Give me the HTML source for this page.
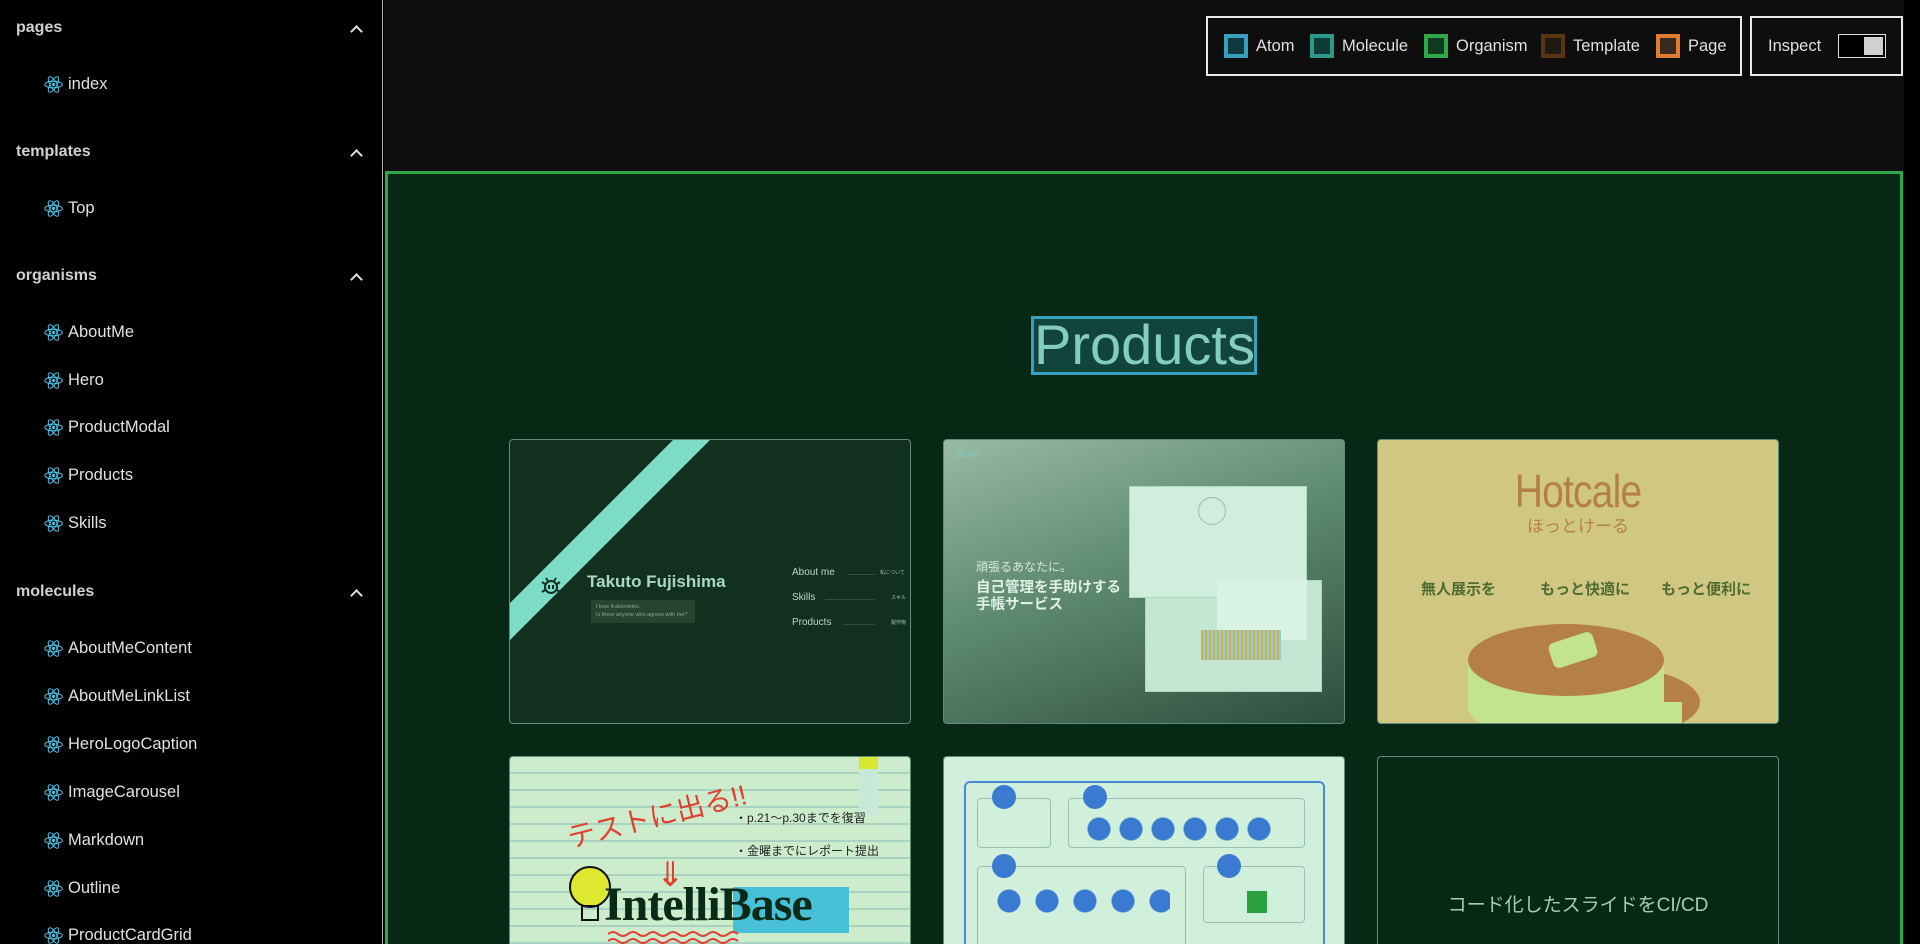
<!DOCTYPE html>
<html><head><meta charset="utf-8"><style>
*{margin:0;padding:0;box-sizing:border-box}
html,body{width:1920px;height:944px;overflow:hidden}
body{background:#000;font-family:"Liberation Sans","Noto Sans CJK JP",sans-serif;position:relative}
.abs{position:absolute}
.side{left:0;top:0;width:383px;height:944px;background:#000;border-right:1px solid #bbb}
.h{position:absolute;left:16px;font-size:16px;font-weight:bold;color:#d0d0d0;line-height:20px}
.chev{position:absolute;left:352px;width:9px;height:9px;border-left:2px solid #ddd;border-top:2px solid #ddd;transform:rotate(45deg)}
.it{position:absolute;left:44px;font-size:16.5px;color:#e0e0e0;line-height:20px;display:flex;align-items:center;gap:5px}
.main{left:384px;top:0;width:1520px;height:944px;background:#0e0e0e}
.frame{left:385px;top:171px;width:1518px;height:773px;background:#072815;border:3px solid #2ea84a;border-bottom:none}
.card{position:absolute;width:402px;height:285px;border:1px solid #5f8f78;border-radius:4px;overflow:hidden}
.r2{height:188px;border-bottom:none;border-radius:4px 4px 0 0}
.leg{left:1206px;top:16px;width:536px;height:60px;border:2px solid #e8e8e8;background:#0e0e0e}
.sw{position:absolute;top:16px;width:24px;height:24px;border:4px solid}
.lt{position:absolute;top:16px;font-size:16.5px;color:#e0e0e0;line-height:24px}
</style></head><body>
<svg width="0" height="0" style="position:absolute"><defs><symbol id="r" viewBox="0 0 24 24"><g fill="none" stroke="#4cc3e6" stroke-width="1.3"><ellipse cx="12" cy="12" rx="11" ry="4.2"/><ellipse cx="12" cy="12" rx="11" ry="4.2" transform="rotate(60 12 12)"/><ellipse cx="12" cy="12" rx="11" ry="4.2" transform="rotate(120 12 12)"/></g><circle cx="12" cy="12" r="2" fill="#4cc3e6"/></symbol></defs></svg>

<div class="abs side">
<div class="h" style="top:18px">pages</div><div class="chev" style="top:27px"></div>
<div class="it" style="top:74px"><svg width="19" height="19"><use href="#r"/></svg>index</div>
<div class="h" style="top:142px">templates</div><div class="chev" style="top:151px"></div>
<div class="it" style="top:198px"><svg width="19" height="19"><use href="#r"/></svg>Top</div>
<div class="h" style="top:266px">organisms</div><div class="chev" style="top:275px"></div>
<div class="it" style="top:322px"><svg width="19" height="19"><use href="#r"/></svg>AboutMe</div>
<div class="it" style="top:370px"><svg width="19" height="19"><use href="#r"/></svg>Hero</div>
<div class="it" style="top:417px"><svg width="19" height="19"><use href="#r"/></svg>ProductModal</div>
<div class="it" style="top:465px"><svg width="19" height="19"><use href="#r"/></svg>Products</div>
<div class="it" style="top:513px"><svg width="19" height="19"><use href="#r"/></svg>Skills</div>
<div class="h" style="top:582px">molecules</div><div class="chev" style="top:591px"></div>
<div class="it" style="top:638px"><svg width="19" height="19"><use href="#r"/></svg>AboutMeContent</div>
<div class="it" style="top:686px"><svg width="19" height="19"><use href="#r"/></svg>AboutMeLinkList</div>
<div class="it" style="top:734px"><svg width="19" height="19"><use href="#r"/></svg>HeroLogoCaption</div>
<div class="it" style="top:782px"><svg width="19" height="19"><use href="#r"/></svg>ImageCarousel</div>
<div class="it" style="top:830px"><svg width="19" height="19"><use href="#r"/></svg>Markdown</div>
<div class="it" style="top:878px"><svg width="19" height="19"><use href="#r"/></svg>Outline</div>
<div class="it" style="top:925px"><svg width="19" height="19"><use href="#r"/></svg>ProductCardGrid</div>
</div>

<div class="abs main"></div>
<div class="abs leg">
<div class="sw" style="left:16px;border-color:#3a9fbf;background:#0f3a40"></div><div class="lt" style="left:48px">Atom</div>
<div class="sw" style="left:102px;border-color:#2c9a8a;background:#0f3a36"></div><div class="lt" style="left:134px">Molecule</div>
<div class="sw" style="left:216px;border-color:#2ea84a;background:#0e3a1e"></div><div class="lt" style="left:248px">Organism</div>
<div class="sw" style="left:333px;border-color:#5a3512;background:#1e1a12"></div><div class="lt" style="left:365px">Template</div>
<div class="sw" style="left:448px;border-color:#e07b30;background:#3a2a1e"></div><div class="lt" style="left:480px">Page</div>
</div>
<div class="abs" style="left:1750px;top:16px;width:153px;height:60px;border:2px solid #e8e8e8;background:#0e0e0e">
<div class="lt" style="left:16px">Inspect</div>
<div style="position:absolute;left:86px;top:16px;width:48px;height:24px;border:1px solid #ddd;background:#000"><div style="position:absolute;right:2px;top:2px;width:19px;height:18px;background:#d0d0d0"></div></div>
</div>

<div class="abs frame"></div>
<div class="abs" style="left:1031px;top:316px;width:226px;height:59px;border:3px solid #3aa0c0;background:#11443a;color:#84ccbc;font-size:56px;line-height:52px;text-align:center;overflow:hidden">Products</div>

<!-- card1 -->
<div class="card" style="left:509px;top:439px;background:#12301f">
<svg class="abs" style="left:0;top:0" width="402" height="285"><polygon points="163,0 200,0 0,200 0,163" fill="#7ddcc8"/></svg>
<svg class="abs" style="left:30px;top:135px" width="22" height="22" viewBox="0 0 22 22"><g fill="none" stroke="#123020" stroke-width="2"><circle cx="11" cy="12" r="6"/><path d="M5 9l-3-2M17 9l3-2M5 15l-3 2M17 15l3 2M8 6l-2-3M14 6l2-3"/><path d="M9 10v4M13 10v4"/></g></svg>
<div class="abs" style="left:77px;top:132px;font-size:17px;font-weight:bold;color:#a8d8c0">Takuto Fujishima</div>
<div class="abs" style="left:81px;top:160px;width:104px;height:23px;background:#28432f;color:#8aa898;font-size:5.5px;line-height:8px;padding:3px 5px;white-space:nowrap">I love Kubernetes.<br>Is there anyone who agrees with me?</div>
<div class="abs" style="left:282px;top:127px;font-size:10px;color:#b8d8c8">About me</div>
<div class="abs" style="left:282px;top:152px;font-size:10px;color:#b8d8c8">Skills</div>
<div class="abs" style="left:282px;top:177px;font-size:10px;color:#b8d8c8">Products</div>
<div class="abs" style="left:338px;top:134px;width:28px;height:1px;background:#2e5040"></div>
<div class="abs" style="left:315px;top:159px;width:50px;height:1px;background:#2e5040"></div>
<div class="abs" style="left:333px;top:184px;width:32px;height:1px;background:#2e5040"></div>
<div class="abs" style="left:370px;top:129px;font-size:5px;color:#a0c0b0">私について</div>
<div class="abs" style="left:381px;top:154px;font-size:5px;color:#a0c0b0">スキル</div>
<div class="abs" style="left:381px;top:179px;font-size:5px;color:#a0c0b0">製作物</div>
</div>

<!-- card2 -->
<div class="card" style="left:943px;top:439px;background:linear-gradient(160deg,#97baa2 0%,#5e8a72 45%,#2c4e3c 100%)">
<div class="abs" style="left:12px;top:6px;font-family:'Liberation Serif',serif;font-size:12px;color:#80d0c0">flow</div>
<div class="abs" style="left:32px;top:118px;font-size:12px;color:#d8eadc">頑張るあなたに。</div>
<div class="abs" style="left:32px;top:140px;font-size:14.5px;line-height:17px;color:#e0f0e4;font-weight:bold">自己管理を手助けする<br>手帳サービス</div>
<div class="abs" style="left:201px;top:140px;width:177px;height:112px;background:#c4e6d2;border:1px solid #b0d8c0"></div>
<div class="abs" style="left:185px;top:46px;width:178px;height:112px;background:#cfeedd;border:1px solid #b0d8c0"></div>
<div class="abs" style="left:254px;top:57px;width:28px;height:28px;border-radius:50%;border:1px solid #9cbcaa"></div>
<div class="abs" style="left:273px;top:140px;width:90px;height:60px;background:#d8f2e4"></div>
<div class="abs" style="left:257px;top:190px;width:80px;height:30px;background:repeating-linear-gradient(90deg,#d8b040 0 2px,#8cd0e0 2px 4px)"></div>
</div>

<!-- card3 -->
<div class="card" style="left:1377px;top:439px;background:#d0c882">
<div class="abs" style="left:0;width:100%;top:24px;text-align:center;font-size:46px;color:#b58048;letter-spacing:-1px;transform:scaleX(.85)">Hotcale</div>
<div class="abs" style="left:0;width:100%;top:72px;text-align:center;font-size:17px;color:#b58048">ほっとけーる</div>
<div class="abs" style="left:43px;top:138px;font-size:15px;font-weight:bold;color:#4e6b32">無人展示を</div>
<div class="abs" style="left:162px;top:138px;font-size:15px;font-weight:bold;color:#4e6b32">もっと快適に</div>
<div class="abs" style="left:283px;top:138px;font-size:15px;font-weight:bold;color:#4e6b32">もっと便利に</div>
<svg class="abs" style="left:0;top:0" width="402" height="285"><ellipse cx="228" cy="262" rx="94" ry="36" fill="#b58048"/><rect x="104" y="262" width="200" height="30" fill="#c2e390"/><rect x="90" y="220" width="196" height="48" fill="#c2e390"/><ellipse cx="188" cy="268" rx="98" ry="30" fill="#c2e390"/><ellipse cx="188" cy="220" rx="98" ry="36" fill="#b58048"/><rect x="172" y="197" width="46" height="26" rx="6" fill="#c2e390" transform="rotate(-18 195 210)"/></svg>
</div>

<!-- card4 -->
<div class="card r2" style="left:509px;top:756px;background:repeating-linear-gradient(180deg,#cdeccc 0 15px,#a9d2c0 15px 17px)">
<div class="abs" style="left:349px;top:0;width:19px;height:58px;background:#c8e8d8"></div>
<div class="abs" style="left:349px;top:0;width:19px;height:12px;background:#d8e830"></div>
<div class="abs" style="left:55px;top:38px;font-size:28px;color:#e04030;transform:rotate(-14deg)">テストに出る!!</div>
<div class="abs" style="left:225px;top:52px;font-size:12px;color:#222">・p.21～p.30までを復習</div>
<div class="abs" style="left:225px;top:85px;font-size:12px;color:#222">・金曜までにレポート提出</div>
<div class="abs" style="left:146px;top:98px;font-size:34px;color:#e04030">⇓</div>
<div class="abs" style="left:223px;top:130px;width:116px;height:46px;background:#48c0d8"></div>
<svg class="abs" style="left:50px;top:105px" width="60" height="68"><circle cx="30" cy="25" r="20" fill="#dfe830" stroke="#111" stroke-width="2"/><rect x="22" y="44" width="16" height="14" fill="none" stroke="#111" stroke-width="2"/></svg>
<div class="abs" style="left:94px;top:120px;font-family:'Liberation Serif',serif;font-weight:bold;font-size:48px;color:#0a2a18;letter-spacing:-1px">IntelliBase</div>
<svg class="abs" style="left:98px;top:172px" width="140" height="16"><path d="M0 5q5-4 10 0t10 0t10 0t10 0t10 0t10 0t10 0t10 0t10 0t10 0t10 0t10 0t10 0M0 12q5-4 10 0t10 0t10 0t10 0t10 0t10 0t10 0t10 0t10 0t10 0t10 0t10 0t10 0" fill="none" stroke="#e04030" stroke-width="2"/></svg>
</div>

<!-- card5 -->
<div class="card r2" style="left:943px;top:756px;background:#d0f0dc">
<div class="abs" style="left:20px;top:24px;width:361px;height:200px;border:2px solid #4a88d8;border-radius:6px"></div>
<div class="abs" style="left:33px;top:41px;width:74px;height:50px;border:1px solid #9cc0b0;border-radius:4px"></div>
<div class="abs" style="left:124px;top:41px;width:237px;height:50px;border:1px solid #9cc0b0;border-radius:4px"></div>
<div class="abs" style="left:33px;top:109px;width:209px;height:100px;border:1px solid #9cc0b0;border-radius:4px"></div>
<div class="abs" style="left:259px;top:109px;width:102px;height:57px;border:1px solid #9cc0b0;border-radius:4px"></div>
<div class="abs" style="left:48px;top:28px;width:24px;height:24px;border-radius:50%;background:#3a7ad0"></div>
<div class="abs" style="left:139px;top:28px;width:24px;height:24px;border-radius:50%;background:#3a7ad0"></div>
<div class="abs" style="left:48px;top:97px;width:24px;height:24px;border-radius:50%;background:#3a7ad0"></div>
<div class="abs" style="left:273px;top:97px;width:24px;height:24px;border-radius:50%;background:#3a7ad0"></div>
<div class="abs" style="left:139px;top:60px;width:195px;height:24px;background:radial-gradient(circle,#3a7ad0 11px,transparent 12px) 0 0/32px 24px repeat-x"></div>
<div class="abs" style="left:46px;top:132px;width:180px;height:24px;background:radial-gradient(circle,#3a7ad0 11px,transparent 12px) 0 0/38px 24px repeat-x"></div>
<div class="abs" style="left:303px;top:134px;width:20px;height:22px;background:#2aa040"></div>
</div>

<!-- card6 -->
<div class="card r2" style="left:1377px;top:756px;background:#072815">
<div class="abs" style="left:0;width:100%;top:133px;text-align:center;font-size:19px;color:#a8ccb8">コード化したスライドをCI/CD</div>
</div>
</body></html>
